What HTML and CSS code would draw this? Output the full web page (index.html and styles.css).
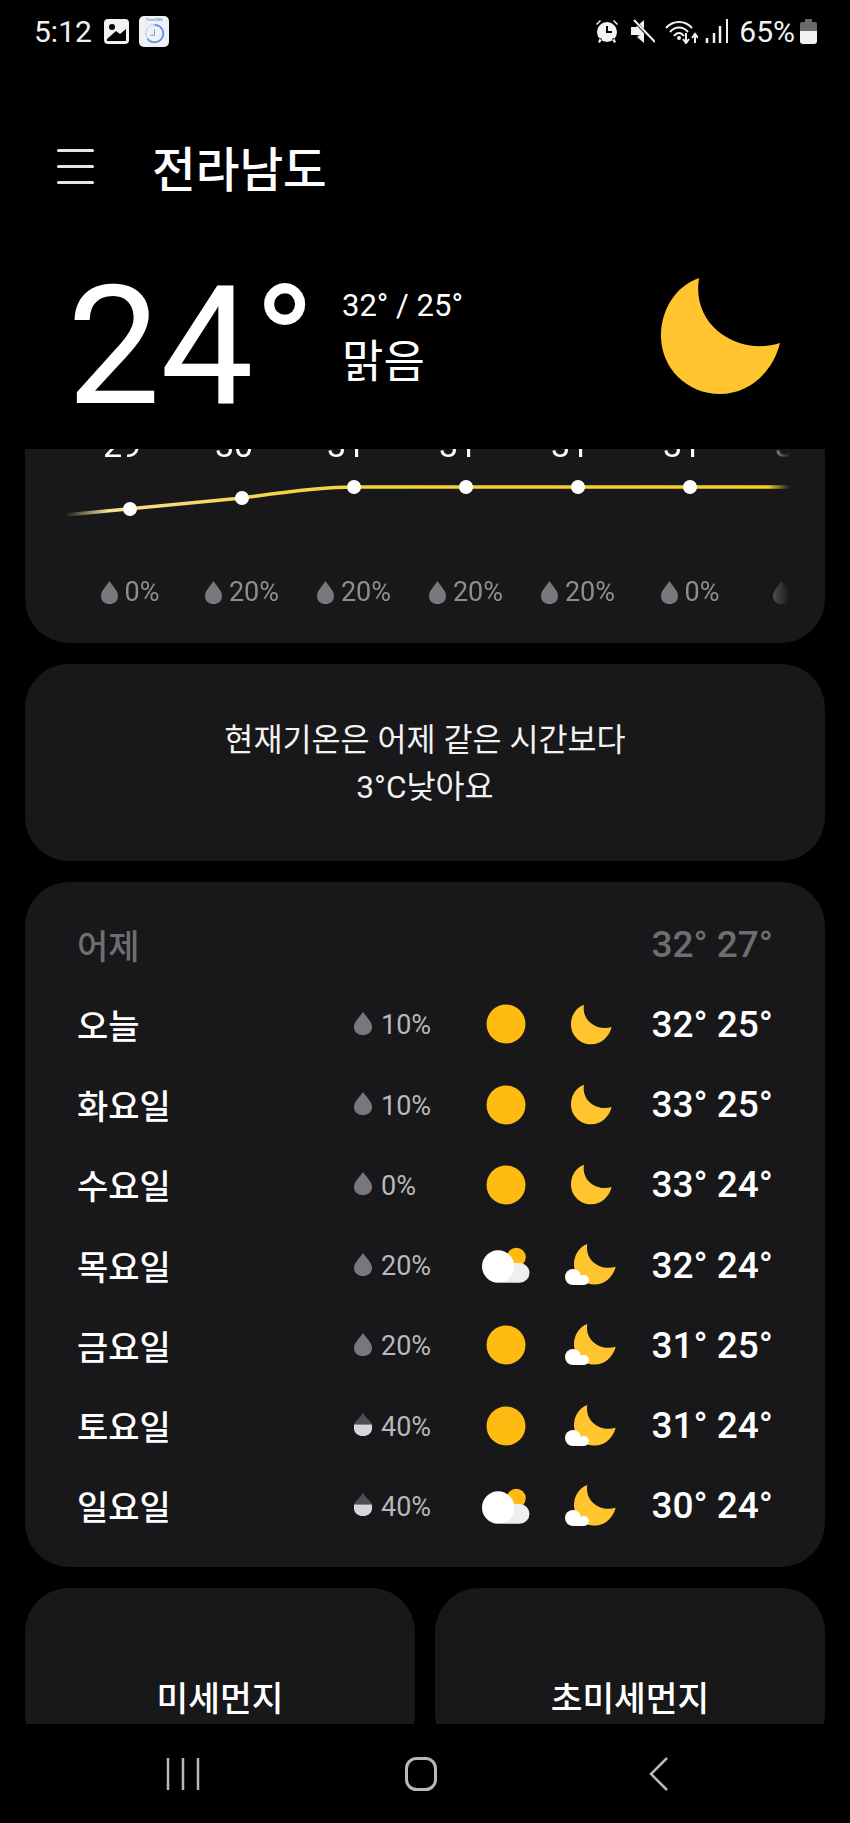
FILE: index.html
```html
<!DOCTYPE html>
<html lang="ko">
<head>
  <meta charset="UTF-8" />
  <meta name="viewport" content="width=device-width, initial-scale=1.0"/>
  <title>전라남도 날씨</title>
  <link rel="stylesheet" href="styles.css">
</head>
<body>

  <!-- Icon definitions -->
  <svg class="defs" width="0" height="0">
    <symbol id="drop" viewBox="0 0 16 22" preserveAspectRatio="none">
      <path d="M8 0C5 5 0 9 0 14.500C0 19 3.500 22 8 22C12.500 22 16 19 16 14.500C16 9 11 5 8 0Z"/>
    </symbol>
    <symbol id="drop-half" viewBox="0 0 16 22" preserveAspectRatio="none">
      <path fill="#504e52" d="M8 0C5 5 0 9 0 11H16C16 9 11 5 8 0Z"/>
      <path fill="#d8d6da" d="M0 11V14.500C0 19 3.500 22 8 22C12.500 22 16 19 16 14.500V11Z"/>
    </symbol>
    <symbol id="moon" viewBox="0 0 120 116">
      <path fill="#ffc42e" d="M38 0C15 8 0 31 0 58C0 90 26 116 59 116C88 116 112 94 119 65C80 78 30 50 38 0Z"/>
    </symbol>
    <symbol id="sun" viewBox="0 0 48 48">
      <circle cx="24" cy="24" r="19.500" fill="#ffbb12"/>
    </symbol>
    <symbol id="cloudy" viewBox="0 0 49 36">
      <circle cx="35" cy="10" r="9.700" fill="#ffbb12"/>
      <path fill="#eeeef0" d="M20 36V16H38.500A10 10 0 0 1 38.500 36Z"/>
      <circle cx="16.500" cy="19.500" r="16.500" fill="#fff"/>
    </symbol>
    <symbol id="night" viewBox="0 0 51 42">
      <path fill="#ffc42e" transform="translate(9 0) scale(0.35)" d="M38 0C15 8 0 31 0 58C0 90 26 116 59 116C88 116 112 94 119 65C80 78 30 50 38 0Z"/>
      <g fill="#fff">
        <circle cx="8" cy="33" r="8"/>
        <circle cx="19" cy="36" r="5"/>
        <rect x="8" y="33" width="11" height="8"/>
      </g>
    </symbol>
  </svg>

  <!-- Status bar -->
  <div class="status-bar">
    <div class="status-left">
      <span class="clock">5:12</span>
      <svg class="st-gallery" viewBox="0 0 25 25">
        <path fill="#f2f2f2" fill-rule="evenodd" d="M4 0H21A4 4 0 0 1 25 4V21A4 4 0 0 1 21 25H4A4 4 0 0 1 0 21V4A4 4 0 0 1 4 0ZM3 20V22H22V10L16 15L12 12ZM8 5A3 3 0 1 0 8 11A3 3 0 1 0 8 5Z"/>
      </svg>
      <div class="st-app">
        <span class="st-app-name">TimeONE</span>
        <svg viewBox="0 0 24 24">
          <path d="M12 2A10 10 0 1 1 4 18" fill="none" stroke="#5d8fe0" stroke-width="2"/>
          <path d="M12 2A10 10 0 0 0 4 18" fill="none" stroke="#a9c4ee" stroke-width="1"/>
          <path d="M12 7V14H7" fill="none" stroke="#8a8f9a" stroke-width="1"/>
        </svg>
      </div>
    </div>
    <div class="status-right">
      <svg class="st-alarm" viewBox="0 0 24 24">
        <path fill="#f2f2f2" fill-rule="evenodd" d="M12 3A10 10 0 1 1 12 23A10 10 0 1 1 12 3ZM11 7V14H17V12H13V7ZM1 5L5 1L6 2L2 6ZM23 5L19 1L18 2L22 6ZM3 23L5 19L7 20L5 24ZM21 23L19 19L17 20L19 24Z"/>
      </svg>
      <svg class="st-mute" viewBox="0 0 24 24">
        <path fill="#f2f2f2" d="M0 8H5L13 1V17L5 16H0Z"/>
        <path fill="#f2f2f2" d="M13 14V24L6 18Z"/>
        <path stroke="#000" stroke-width="3" d="M1 -1L24 24"/>
        <path stroke="#f2f2f2" stroke-width="2" d="M3 1L24 23"/>
      </svg>
      <svg class="st-wifi" viewBox="0 0 33 25">
        <g fill="none" stroke="#f2f2f2" stroke-width="2">
          <path d="M1 9C8 1 20 1 27 9"/>
          <path d="M5 13C10 7 18 7 23 13"/>
          <path d="M9 17C12 13 16 13 19 17"/>
        </g>
        <circle cx="14" cy="19" r="2" fill="#f2f2f2"/>
        <path fill="none" stroke="#f2f2f2" stroke-width="2" d="M21 14V23M18 20L21 24L24 20M30 24V16M27 19L30 15L33 19"/>
      </svg>
      <svg class="st-signal" viewBox="0 0 23 24">
        <path stroke="#f2f2f2" stroke-width="2.500" d="M2 24V19M9 24V14M15 24V7"/>
        <path stroke="#f2f2f2" stroke-width="2" d="M22 24V0"/>
      </svg>
      <span class="battery-text">65%</span>
      <svg class="battery" viewBox="0 0 17 25">
        <path fill="#6a6a6a" d="M5 0H12V3H15A2 2 0 0 1 17 5V13H0V5A2 2 0 0 1 2 3H5Z"/>
        <path fill="#f2f2f2" d="M0 12H17V22A3 3 0 0 1 14 25H3A3 3 0 0 1 0 22Z"/>
      </svg>
    </div>
  </div>

  <!-- App bar -->
  <div class="app-bar">
    <div class="hamburger"><span></span><span></span><span></span></div>
    <h1>전라남도</h1>
  </div>

  <!-- Current weather -->
  <div class="now">
    <div class="now-temp">24°</div>
    <div class="now-detail">
      <div class="now-range">32° / 25°</div>
      <div class="now-desc">맑음</div>
    </div>
    <svg class="now-icon"><use href="#moon"/></svg>
  </div>

  <!-- Scrolling cards -->
  <main class="cards">

    <section class="card hourly">
      <div class="hourly-inner">
        <div class="hour-row hour-temps">
          <span>29</span><span>30</span><span>31</span><span>31</span><span>31</span><span>31</span><span>31</span>
        </div>
        <svg class="hour-line" viewBox="0 0 725 60">
          <defs>
            <linearGradient id="lineFade" gradientUnits="userSpaceOnUse" x1="0" y1="0" x2="725" y2="0">
              <stop offset="0" stop-color="#f6e7a8" stop-opacity="0"/>
              <stop offset="0.06" stop-color="#f6e09a"/>
              <stop offset="0.3" stop-color="#f5d440"/>
              <stop offset="0.97" stop-color="#f5d020"/>
              <stop offset="1" stop-color="#f5d020" stop-opacity="0"/>
            </linearGradient>
          </defs>
          <path d="M0 43L177 26C200 23 250 15 289 15H725" fill="none" stroke="url(#lineFade)" stroke-width="3.500"/>
          <g fill="#fff">
            <circle cx="65" cy="37" r="7"/>
            <circle cx="177" cy="26" r="7"/>
            <circle cx="289" cy="15" r="7"/>
            <circle cx="401" cy="15" r="7"/>
            <circle cx="513" cy="15" r="7"/>
            <circle cx="625" cy="15" r="7"/>
          </g>
        </svg>
        <div class="hour-row hour-pops">
          <span><svg class="drop"><use href="#drop"/></svg>0%</span>
          <span><svg class="drop"><use href="#drop"/></svg>20%</span>
          <span><svg class="drop"><use href="#drop"/></svg>20%</span>
          <span><svg class="drop"><use href="#drop"/></svg>20%</span>
          <span><svg class="drop"><use href="#drop"/></svg>20%</span>
          <span><svg class="drop"><use href="#drop"/></svg>0%</span>
          <span><svg class="drop"><use href="#drop"/></svg>0%</span>
        </div>
      </div>
    </section>

    <section class="card compare">
      <p>현재기온은 어제 같은 시간보다<br>3°C낮아요</p>
    </section>

    <section class="card forecast">
      <div class="day yesterday">
        <span class="day-name">어제</span>
        <span class="day-temps">32° 27°</span>
      </div>
      <div class="day">
        <span class="day-name">오늘</span>
        <span class="day-pop"><svg class="drop"><use href="#drop"/></svg>10%</span>
        <svg class="ic-day"><use href="#sun"/></svg>
        <svg class="ic-moon"><use href="#moon"/></svg>
        <span class="day-temps">32° 25°</span>
      </div>
      <div class="day">
        <span class="day-name">화요일</span>
        <span class="day-pop"><svg class="drop"><use href="#drop"/></svg>10%</span>
        <svg class="ic-day"><use href="#sun"/></svg>
        <svg class="ic-moon"><use href="#moon"/></svg>
        <span class="day-temps">33° 25°</span>
      </div>
      <div class="day">
        <span class="day-name">수요일</span>
        <span class="day-pop"><svg class="drop"><use href="#drop"/></svg>0%</span>
        <svg class="ic-day"><use href="#sun"/></svg>
        <svg class="ic-moon"><use href="#moon"/></svg>
        <span class="day-temps">33° 24°</span>
      </div>
      <div class="day">
        <span class="day-name">목요일</span>
        <span class="day-pop"><svg class="drop"><use href="#drop"/></svg>20%</span>
        <svg class="ic-day ic-cloud"><use href="#cloudy"/></svg>
        <svg class="ic-moon ic-night"><use href="#night"/></svg>
        <span class="day-temps">32° 24°</span>
      </div>
      <div class="day">
        <span class="day-name">금요일</span>
        <span class="day-pop"><svg class="drop"><use href="#drop"/></svg>20%</span>
        <svg class="ic-day"><use href="#sun"/></svg>
        <svg class="ic-moon ic-night"><use href="#night"/></svg>
        <span class="day-temps">31° 25°</span>
      </div>
      <div class="day">
        <span class="day-name">토요일</span>
        <span class="day-pop"><svg class="drop"><use href="#drop-half"/></svg>40%</span>
        <svg class="ic-day"><use href="#sun"/></svg>
        <svg class="ic-moon ic-night"><use href="#night"/></svg>
        <span class="day-temps">31° 24°</span>
      </div>
      <div class="day">
        <span class="day-name">일요일</span>
        <span class="day-pop"><svg class="drop"><use href="#drop-half"/></svg>40%</span>
        <svg class="ic-day ic-cloud"><use href="#cloudy"/></svg>
        <svg class="ic-moon ic-night"><use href="#night"/></svg>
        <span class="day-temps">30° 24°</span>
      </div>
    </section>

    <div class="dust-row">
      <section class="card dust">미세먼지</section>
      <section class="card dust">초미세먼지</section>
    </div>
  </main>

  <!-- Navigation bar -->
  <div class="nav-bar">
    <svg viewBox="0 0 34 34"><path d="M2 1V33M17 1V33M32 1V33" fill="none" stroke="#b9b9b9" stroke-width="2.500"/></svg>
    <svg viewBox="0 0 34 34"><rect x="2.500" y="1.500" width="29" height="31" rx="10" fill="none" stroke="#b9b9b9" stroke-width="3"/></svg>
    <svg viewBox="0 0 34 34"><path d="M18 1L2 17L18 33" fill="none" stroke="#b9b9b9" stroke-width="2.500"/></svg>
  </div>

</body>
</html>
```

FILE: styles.css
```css
html, body {
  margin: 0;
  height: 100%;
  background: #000;
  color: #fff;
  font-family: Roboto, "Noto Sans CJK KR", sans-serif;
  overflow: hidden;
}

body {
  display: flex;
  flex-direction: column;
  height: 1823px;
}

.defs {
  position: absolute;
}

/* Status bar */
.status-bar {
  height: 62px;
  display: flex;
  justify-content: space-between;
  align-items: center;
  padding: 0 33px 0 34px;
  color: #f2f2f2;
}

.status-left,
.status-right {
  display: flex;
  align-items: center;
}

.clock {
  font-size: 30px;
  width: 70px;
}

.st-gallery {
  width: 25px;
  height: 25px;
}

.st-app {
  width: 30px;
  height: 31px;
  margin-left: 10px;
  background: #eef1f5;
  border-radius: 5px;
  display: flex;
  flex-direction: column;
  align-items: center;
}

.st-app-name {
  font-size: 4px;
  color: #3d6fd0;
  line-height: 6px;
  margin-top: 1px;
}

.st-app svg {
  width: 21px;
  height: 21px;
}

.st-alarm { width: 24px; height: 24px; }
.st-mute { width: 24px; height: 24px; margin-left: 12px; }
.st-wifi { width: 33px; height: 25px; margin-left: 10px; }
.st-signal { width: 23px; height: 24px; margin-left: 7px; }

.battery-text {
  font-size: 30px;
  margin-left: 11px;
}

.battery {
  width: 17px;
  height: 25px;
  margin-left: 5px;
}

/* App bar */
.app-bar {
  height: 84px;
  margin-top: 62px;
  display: flex;
  align-items: center;
  padding-left: 57px;
}

.hamburger {
  width: 37px;
  display: flex;
  flex-direction: column;
  gap: 13px;
}

.hamburger span {
  height: 3px;
  background: #e6e6e6;
  border-radius: 2px;
}

h1 {
  margin: 0 0 0 58px;
  font-size: 47.500px;
  font-weight: 500;
}

/* Current weather */
.now {
  height: 241px;
  display: flex;
  align-items: flex-start;
  padding: 0 69px 0 67px;
}

.now-temp {
  font-size: 166px;
  font-weight: 400;
  line-height: 166px;
  margin-top: 56px;
  width: 275px;
}

.now-detail {
  margin-top: 80px;
}

.now-range {
  font-size: 31px;
  line-height: 36px;
}

.now-desc {
  font-size: 45px;
  line-height: 56px;
  margin-top: 11px;
}

.now-icon {
  width: 120px;
  height: 116px;
  margin: 70px 0 0 auto;
}

/* Cards */
.cards {
  flex: 1;
  min-height: 0;
  overflow: hidden;
  display: flex;
  flex-direction: column;
  gap: 21px;
  padding: 0 25px;
}

.card {
  background: #181719;
  border-radius: 44px;
}

.hourly {
  height: 194px;
  flex: none;
  border-radius: 0 0 44px 44px;
  overflow: hidden;
  display: flex;
  flex-direction: column;
  justify-content: flex-end;
}

.hourly-inner {
  width: 725px;
  margin-left: 40px;
  padding-bottom: 36px;
}

.hour-row {
  display: flex;
  padding-left: 9px;
  overflow: hidden;
  -webkit-mask-image: linear-gradient(to right, #000 695px, transparent 725px);
  mask-image: linear-gradient(to right, #000 695px, transparent 725px);
}

.hour-row span {
  flex: none;
  width: 112px;
  text-align: center;
}

.hour-temps {
  padding-left: 1px;
  font-size: 34px;
  line-height: 40px;
}

.hour-line {
  display: block;
  width: 725px;
  height: 60px;
  margin-top: 7px;
}

.hour-pops {
  font-size: 27px;
  line-height: 30px;
  color: #8e8c90;
  margin-top: 45px;
}

.drop {
  width: 17px;
  height: 23px;
  fill: #79777b;
  margin-right: 7px;
  vertical-align: -3px;
}

.compare {
  height: 197px;
  flex: none;
  box-sizing: border-box;
  padding-top: 3px;
  display: flex;
  align-items: center;
  justify-content: center;
}

.compare p {
  margin: 0;
  font-size: 31.600px;
  line-height: 47px;
  text-align: center;
  color: #f2f2f2;
}

.forecast {
  flex: none;
  padding: 22px 52px 21px;
}

.day {
  height: 80.25px;
  display: grid;
  grid-template-columns: 276px 129px 48px 85px 1fr;
  align-items: center;
}

.day-name {
  grid-column: 1;
  font-size: 34px;
  font-weight: 500;
}

.day-pop {
  grid-column: 2;
  padding-top: 2px;
  font-size: 27px;
  color: #b9b7bb;
  display: flex;
  align-items: center;
}

.day-pop .drop {
  width: 18px;
  margin: -4px 9px 0 1px;
}

.ic-day {
  grid-column: 3;
  width: 48px;
  height: 48px;
}

.ic-moon {
  grid-column: 4;
  justify-self: end;
  width: 41px;
  height: 41px;
  margin-right: 3px;
}

.ic-cloud {
  height: 36px;
}

.ic-night {
  width: 51px;
  height: 42px;
  margin-right: -1px;
}

.day-temps {
  grid-column: 5;
  text-align: right;
  font-size: 37px;
  font-weight: 500;
  white-space: nowrap;
}

.yesterday {
  color: #6f6d71;
}

.dust-row {
  flex: none;
  display: grid;
  grid-template-columns: 390px 390px;
  gap: 20px;
}

.dust {
  height: 170px;
  padding-top: 87px;
  text-align: center;
  font-size: 34.500px;
  font-weight: 500;
  line-height: 48px;
  box-sizing: border-box;
}

/* Navigation bar */
.nav-bar {
  height: 99px;
  flex: none;
  background: #000;
  display: grid;
  grid-template-columns: 166px 34px 204px 34px 211px 34px;
  padding: 33px 0 0 0;
  box-sizing: border-box;
}

.nav-bar svg {
  width: 34px;
  height: 34px;
}

.nav-bar svg:nth-child(1) { grid-column: 2; }
.nav-bar svg:nth-child(2) { grid-column: 4; }
.nav-bar svg:nth-child(3) { grid-column: 6; }
```
